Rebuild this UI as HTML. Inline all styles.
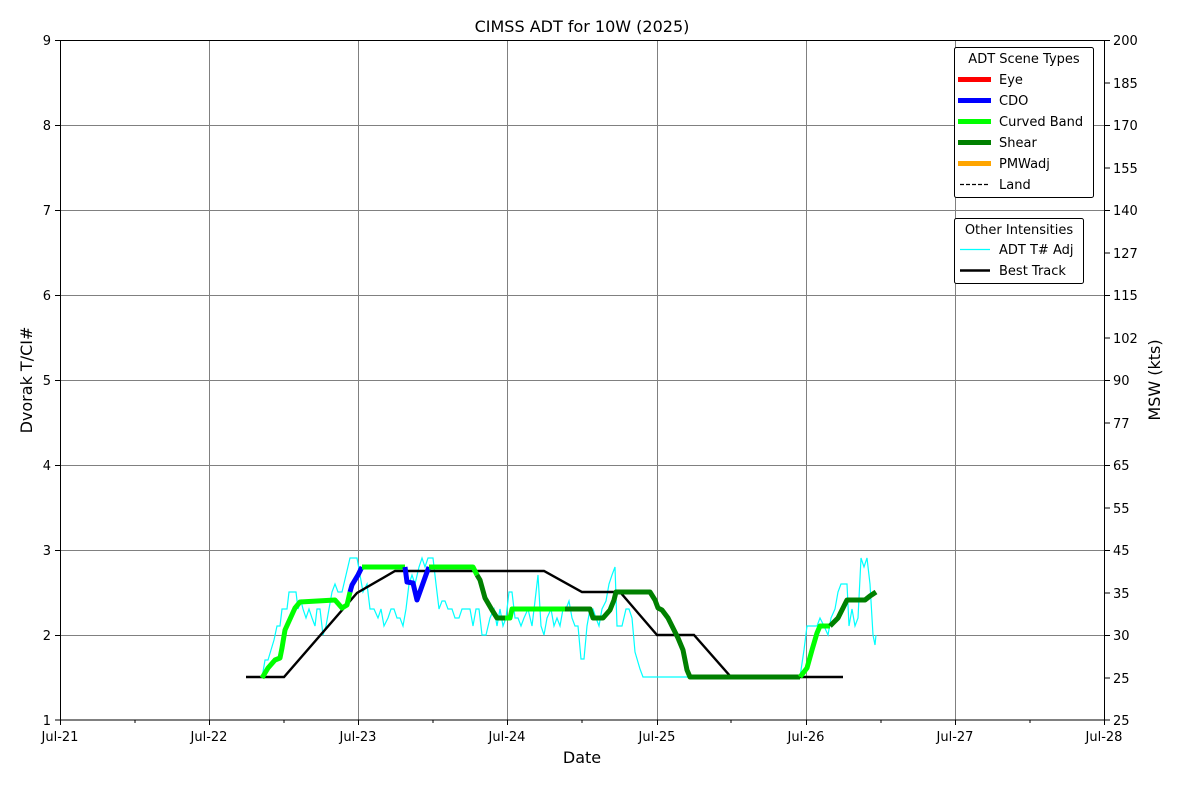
<!DOCTYPE html>
<html><head><meta charset="utf-8"><style>
html,body{margin:0;padding:0;background:#fff;}
svg{display:block;font-family:"DejaVu Sans","Liberation Sans",sans-serif;}
</style></head><body>
<svg width="1200" height="800" viewBox="0 0 1200 800" xmlns="http://www.w3.org/2000/svg">
<rect width="1200" height="800" fill="#fff"/>
<text x="582" y="32" font-size="16" text-anchor="middle">CIMSS ADT for 10W (2025)</text>
<!-- grid -->
<g stroke="#808080" stroke-width="1">
<line x1="209.5" y1="40" x2="209.5" y2="720"/><line x1="358.5" y1="40" x2="358.5" y2="720"/>
<line x1="507.5" y1="40" x2="507.5" y2="720"/><line x1="657.5" y1="40" x2="657.5" y2="720"/>
<line x1="806.5" y1="40" x2="806.5" y2="720"/><line x1="955.5" y1="40" x2="955.5" y2="720"/>
<line x1="60" y1="125.5" x2="1105" y2="125.5"/><line x1="60" y1="210.5" x2="1105" y2="210.5"/>
<line x1="60" y1="295.5" x2="1105" y2="295.5"/><line x1="60" y1="380.5" x2="1105" y2="380.5"/>
<line x1="60" y1="465.5" x2="1105" y2="465.5"/><line x1="60" y1="550.5" x2="1105" y2="550.5"/>
<line x1="60" y1="635.5" x2="1105" y2="635.5"/>
</g>
<!-- cyan ADT -->
<polyline fill="none" stroke="#00ffff" stroke-width="1.2" points="262,678 265,660 268,660 271,650 274,640 277,626 280,626 282,609 287,609 289,592 296,592 298,609 301,601 303,609 306,618 309,609 312,618 315,626 317,609 320,609 323,635 326,626 329,609 332,592 335,584 338,592 342,592 346,575 350,558 357,558 360,575 363,592 367,584 370,609 374,609 378,618 381,609 384,626 388,618 391,609 394,609 397,618 400,618 403,626 406,609 409,584 412,575 415,584 419,567 422,558 425,567 428,558 433,558 436,584 439,609 442,601 445,601 448,609 452,609 455,618 459,618 462,609 466,609 470,609 473,626 476,609 479,609 482,635 486,635 490,618 494,609 497,626 500,609 503,626 506,618 509,592 512,592 515,618 518,618 521,626 524,618 528,609 532,626 535,601 538,575 541,626 544,635 547,618 551,609 554,626 557,618 560,626 563,609 566,609 569,601 572,618 575,626 578,626 581,659 584,659 587,626 590,609 593,609 596,618 599,626 602,609 606,601 609,584 612,575 615,567 617,626 622,626 626,609 629,609 632,618 635,652 640,669 643,677 690,677 800,677 804,650 807,626 817,626 820,618 824,626 828,635 831,618 835,609 838,592 841,584 847,584 849,626 852,609 855,626 858,618 861,558 864,567 867,558 870,584 873,635 875,645 876,635"/>
<!-- best track -->
<polyline fill="none" stroke="#000" stroke-width="2.4" points="246,677 284,677 357,593 395,571 544,571 582,592 620,592 657,635 694,635 731,677 843,677"/>
<!-- scene types -->
<g fill="none" stroke-width="5" stroke-linejoin="round" stroke-linecap="butt">
<polyline stroke="#00ff00" points="262,678 268,668 275,660 280,658 282,648 285,630 295,608 300,602 335,600 342,608 347,605 350,592"/>
<polyline stroke="#0000ff" points="350,592 352,585 358,575 362,567"/>
<polyline stroke="#00ff00" points="362,567 405,567"/>
<polyline stroke="#0000ff" points="405,567 407,582 413,583 417,600 427,572 429,567"/>
<polyline stroke="#00ff00" points="429,567 473,567 477,575"/>
<polyline stroke="#008000" points="477,575 480,580 485,598 492,610 497,618 505,618"/>
<polyline stroke="#00ff00" points="505,618 510,618 512,609 565,609"/>
<polyline stroke="#008000" points="565,609 590,609 593,618 603,618 610,610 614,600 616,592 650,592 655,600 658,608 662,610 668,618 672,626 678,638 683,650 687,670 690,677 800,677"/>
<polyline stroke="#00ff00" points="800,677 807,668 812,650 817,633 820,626 830,626"/>
<polyline stroke="#008000" points="830,626 838,618 843,608 847,600 865,600 870,596 876,592"/>
</g>
<!-- axes frame -->
<rect x="60.5" y="40.5" width="1044" height="679.5" fill="none" stroke="#000" stroke-width="1"/>
<g stroke="#000" stroke-width="1">
<line x1="55" y1="40.5" x2="60" y2="40.5"/><line x1="55" y1="125.5" x2="60" y2="125.5"/><line x1="55" y1="210.5" x2="60" y2="210.5"/><line x1="55" y1="295.5" x2="60" y2="295.5"/><line x1="55" y1="380.5" x2="60" y2="380.5"/><line x1="55" y1="465.5" x2="60" y2="465.5"/><line x1="55" y1="550.5" x2="60" y2="550.5"/><line x1="55" y1="635.5" x2="60" y2="635.5"/><line x1="55" y1="720" x2="60" y2="720"/>
<line x1="60.5" y1="720" x2="60.5" y2="725"/><line x1="209.5" y1="720" x2="209.5" y2="725"/><line x1="358.5" y1="720" x2="358.5" y2="725"/><line x1="507.5" y1="720" x2="507.5" y2="725"/><line x1="657.5" y1="720" x2="657.5" y2="725"/><line x1="806.5" y1="720" x2="806.5" y2="725"/><line x1="955.5" y1="720" x2="955.5" y2="725"/><line x1="1104.5" y1="720" x2="1104.5" y2="725"/>
<line x1="135" y1="720" x2="135" y2="723"/><line x1="284" y1="720" x2="284" y2="723"/><line x1="433" y1="720" x2="433" y2="723"/><line x1="582" y1="720" x2="582" y2="723"/><line x1="731" y1="720" x2="731" y2="723"/><line x1="881" y1="720" x2="881" y2="723"/><line x1="1030" y1="720" x2="1030" y2="723"/>
</g>
<g stroke="#000" stroke-width="1">
<line x1="1105" y1="40.5" x2="1110" y2="40.5"/><line x1="1105" y1="83" x2="1110" y2="83"/><line x1="1105" y1="125.5" x2="1110" y2="125.5"/><line x1="1105" y1="168" x2="1110" y2="168"/><line x1="1105" y1="210.5" x2="1110" y2="210.5"/><line x1="1105" y1="253" x2="1110" y2="253"/><line x1="1105" y1="295.5" x2="1110" y2="295.5"/><line x1="1105" y1="338" x2="1110" y2="338"/><line x1="1105" y1="380.5" x2="1110" y2="380.5"/><line x1="1105" y1="423" x2="1110" y2="423"/><line x1="1105" y1="465.5" x2="1110" y2="465.5"/><line x1="1105" y1="508" x2="1110" y2="508"/><line x1="1105" y1="550.5" x2="1110" y2="550.5"/><line x1="1105" y1="593" x2="1110" y2="593"/><line x1="1105" y1="635.5" x2="1110" y2="635.5"/><line x1="1105" y1="678" x2="1110" y2="678"/><line x1="1105" y1="720" x2="1110" y2="720"/>
</g>
<g font-size="13" text-anchor="end">
<text x="51" y="45">9</text><text x="51" y="130">8</text><text x="51" y="215">7</text><text x="51" y="300">6</text><text x="51" y="385">5</text><text x="51" y="470">4</text><text x="51" y="555">3</text><text x="51" y="640">2</text><text x="51" y="725">1</text>
</g>
<g font-size="13">
<text x="1113" y="45">200</text><text x="1113" y="88">185</text><text x="1113" y="130">170</text><text x="1113" y="173">155</text><text x="1113" y="215">140</text><text x="1113" y="258">127</text><text x="1113" y="300">115</text><text x="1113" y="343">102</text><text x="1113" y="385">90</text><text x="1113" y="428">77</text><text x="1113" y="470">65</text><text x="1113" y="513">55</text><text x="1113" y="555">45</text><text x="1113" y="598">35</text><text x="1113" y="640">30</text><text x="1113" y="683">25</text><text x="1113" y="725">25</text>
</g>
<g font-size="13" text-anchor="middle">
<text x="60" y="741">Jul-21</text><text x="209" y="741">Jul-22</text><text x="358" y="741">Jul-23</text><text x="507" y="741">Jul-24</text><text x="657" y="741">Jul-25</text><text x="806" y="741">Jul-26</text><text x="955" y="741">Jul-27</text><text x="1104" y="741">Jul-28</text>
</g>
<text x="582" y="763" font-size="16" text-anchor="middle">Date</text>
<text transform="translate(32,380) rotate(-90)" font-size="16" text-anchor="middle">Dvorak T/CI#</text>
<text transform="translate(1160,380) rotate(-90)" font-size="16" text-anchor="middle">MSW (kts)</text>
<!-- legend 1 -->
<rect x="954.5" y="47.5" width="139" height="150" rx="2" fill="#fff" stroke="#000" stroke-width="1"/>
<g font-size="13">
<text x="1024" y="63" text-anchor="middle">ADT Scene Types</text>
<text x="999" y="84">Eye</text><text x="999" y="105">CDO</text><text x="999" y="126">Curved Band</text><text x="999" y="147">Shear</text><text x="999" y="168">PMWadj</text><text x="999" y="189">Land</text>
</g>
<g stroke-width="5">
<line x1="958" y1="79.5" x2="991" y2="79.5" stroke="#ff0000"/>
<line x1="958" y1="100.5" x2="991" y2="100.5" stroke="#0000ff"/>
<line x1="958" y1="121.5" x2="991" y2="121.5" stroke="#00ff00"/>
<line x1="958" y1="142.5" x2="991" y2="142.5" stroke="#008000"/>
<line x1="958" y1="163.5" x2="991" y2="163.5" stroke="#ffa500"/>
</g>
<line x1="960" y1="184.5" x2="990" y2="184.5" stroke="#000" stroke-width="1.2" stroke-dasharray="4,2"/>
<!-- legend 2 -->
<rect x="954.5" y="218.5" width="129" height="65" rx="2" fill="#fff" stroke="#000" stroke-width="1"/>
<g font-size="13">
<text x="1019" y="234" text-anchor="middle">Other Intensities</text>
<text x="999" y="254">ADT T# Adj</text><text x="999" y="275">Best Track</text>
</g>
<line x1="960" y1="249.5" x2="990" y2="249.5" stroke="#00ffff" stroke-width="1.2"/>
<line x1="960" y1="270.5" x2="990" y2="270.5" stroke="#000" stroke-width="2.4"/>
</svg>
</body></html>
